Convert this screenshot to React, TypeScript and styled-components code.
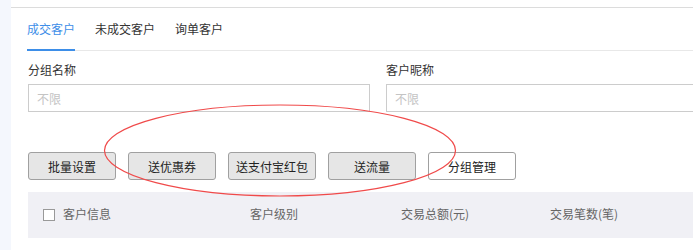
import React from "react";
import styled, { createGlobalStyle } from "styled-components";

const GlobalStyle = createGlobalStyle`
	html, body {
		margin: 0;
		padding: 0;
		background: #ffffff;
	}
	body {
		font-family: "Noto Sans CJK SC", "Noto Sans", sans-serif;
		font-size: 12px;
		color: #333;
	}
`;

const Page = styled.div`
	position: relative;
	display: flex;
	width: 693px;
	height: 250px;
	overflow: hidden;
`;

const SideStrip = styled.div`
	width: 11px;
	flex-shrink: 0;
	background: #f4f7fd;
`;

const Panel = styled.div`
	flex: 1;
	padding-top: 7px;
	background: #fff;
`;

const PanelInner = styled.div`
	border-top: 1px solid #dcdcdc;
	padding: 0 0 0 16px;
`;

const TabBar = styled.div`
	display: flex;
	align-items: flex-end;
	gap: 20px;
	height: 42px;
	margin-left: 0;
	border-bottom: 1px solid #e8e8e8;
`;

const Tab = styled.div<{ active?: boolean }>`
	display: flex;
	align-items: center;
	height: 41px;
	margin-bottom: -1px;
	border-bottom: 2px solid ${(props) => (props.active ? "#3d8ee8" : "transparent")};
	color: ${(props) => (props.active ? "#3d8ee8" : "#333")};
	line-height: 12px;
	white-space: nowrap;
`;

const FieldRow = styled.div`
	display: flex;
	gap: 16px;
	padding: 9px 0 0 1px;
`;

const Field = styled.div`
	display: flex;
	flex-direction: column;
	width: 342px;
	flex-shrink: 0;
`;

const Label = styled.div`
	height: 20px;
	line-height: 20px;
	margin-bottom: 4px;
	color: #333;
`;

const Input = styled.div`
	box-sizing: border-box;
	height: 28px;
	padding-left: 8px;
	display: flex;
	align-items: center;
	border: 1px solid #cccccc;
	color: #c4c4c4;
`;

const Toolbar = styled.div`
	display: flex;
	gap: 12px;
	padding: 40px 0 0 1px;
`;

const Button = styled.div<{ plain?: boolean }>`
	box-sizing: border-box;
	width: 88px;
	height: 28px;
	display: flex;
	align-items: center;
	justify-content: center;
	border: 1px solid #a0a0a0;
	border-radius: 3px;
	background: ${(props) => (props.plain ? "#ffffff" : "#e6e6e6")};
	color: #222;
	font-size: 12px;
	white-space: nowrap;
`;

const TableHead = styled.div`
	display: grid;
	grid-template-columns: 207px 151px 149px 1fr;
	align-items: center;
	height: 46px;
	margin: 12px 0 0 1px;
	padding: 0 0 3px 15px;
	box-sizing: border-box;
	background: #f0f0f5;
	color: #666;
	white-space: nowrap;
`;

const HeadCell = styled.div`
	display: flex;
	align-items: center;
	gap: 8px;
`;

const CheckBox = styled.span`
	display: inline-block;
	box-sizing: border-box;
	width: 12px;
	height: 12px;
	border: 1px solid #999;
	background: #fff;
	margin-top: 2px;
`;

const Mark = styled.svg`
	position: absolute;
	left: 0;
	top: 0;
	pointer-events: none;
`;

const tabs = ["成交客户", "未成交客户", "询单客户"];
const actions = ["批量设置", "送优惠券", "送支付宝红包", "送流量"];

export default function App() {
	return (
		<>
			<GlobalStyle />
			<Page>
				<SideStrip />
				<Panel>
					<PanelInner>
						<TabBar>
							{tabs.map((t, i) => (
								<Tab key={t} active={i === 0}>
									{t}
								</Tab>
							))}
						</TabBar>
						<FieldRow>
							<Field>
								<Label>分组名称</Label>
								<Input>不限</Input>
							</Field>
							<Field>
								<Label>客户昵称</Label>
								<Input>不限</Input>
							</Field>
						</FieldRow>
						<Toolbar>
							{actions.map((a) => (
								<Button key={a}>{a}</Button>
							))}
							<Button plain>分组管理</Button>
						</Toolbar>
						<TableHead>
							<HeadCell>
								<CheckBox />
								客户信息
							</HeadCell>
							<HeadCell>客户级别</HeadCell>
							<HeadCell>交易总额(元)</HeadCell>
							<HeadCell>交易笔数(笔)</HeadCell>
						</TableHead>
					</PanelInner>
				</Panel>
				<Mark width="693" height="250" viewBox="0 0 693 250">
					<ellipse
						cx="280"
						cy="150.5"
						rx="175.5"
						ry="45.5"
						fill="none"
						stroke="#f04a4a"
						strokeWidth="1.2"
					/>
				</Mark>
			</Page>
		</>
	);
}
